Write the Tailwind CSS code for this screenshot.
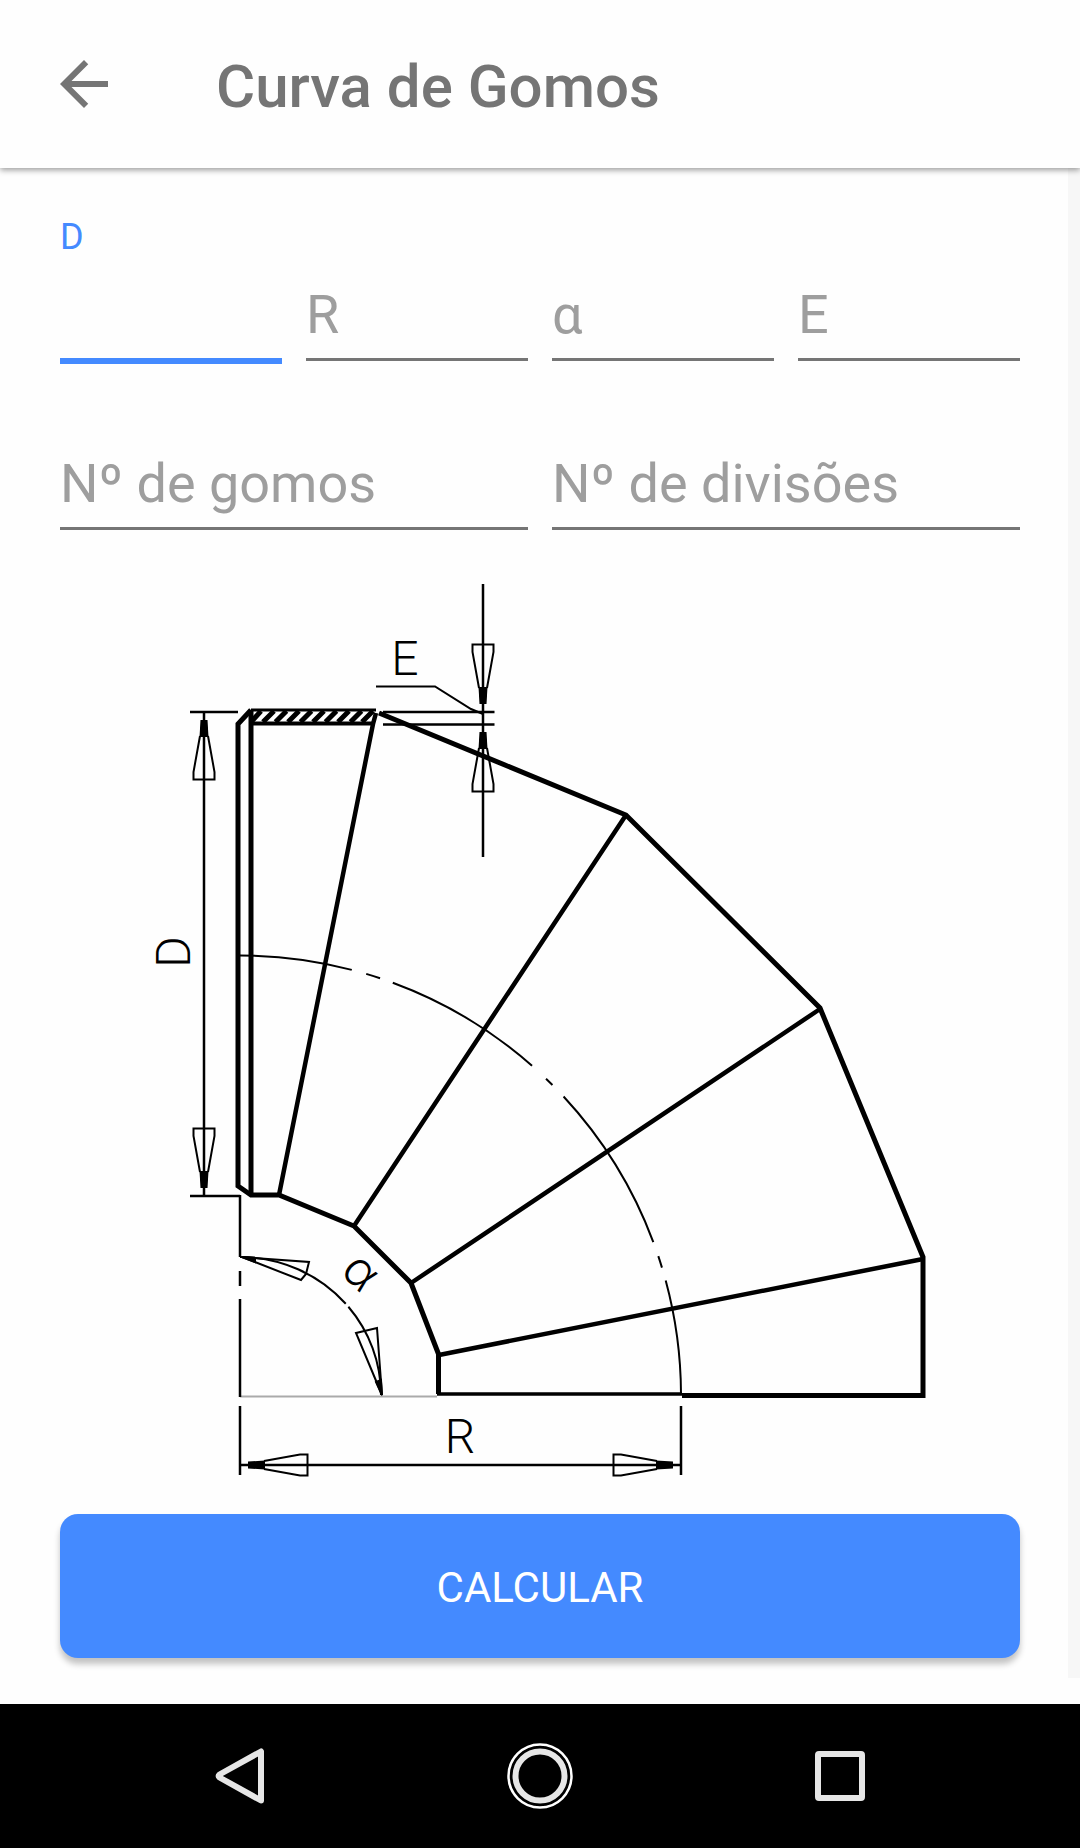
<!DOCTYPE html>
<html lang="pt-BR">
<head>
<meta charset="utf-8">
<meta name="viewport" content="width=device-width, initial-scale=1">
<title>Curva de Gomos</title>
<script src="https://cdn.jsdelivr.net/npm/@tailwindcss/browser@4"></script>
</head>
<body class="flex min-h-screen flex-col bg-[#fefefe] font-['Roboto',sans-serif]">

<header class="relative z-10 flex h-[168px] items-center gap-24 bg-[#fefefe] px-12 shadow-[0_2px_6px_rgba(0,0,0,0.4)]">
  <button type="button" aria-label="Voltar" class="size-[72px]">
    <svg viewBox="0 0 24 24" class="size-full fill-[#757575]"><path d="M20 11H7.83l5.59-5.59L12 4l-8 8 8 8 1.41-1.41L7.83 13H20z"/></svg>
  </button>
  <h1 class="pt-1.5 text-[60px] leading-[74px] font-medium text-[#757575]">Curva de Gomos</h1>
</header>

<div class="flex grow">
  <main class="grow pt-[45px] pr-12 pb-[46px] pl-[60px]">
    <form>
      <div class="grid grid-cols-4 items-start gap-6">
        <div class="flex flex-col gap-[10px]">
          <label for="diametro" class="text-4xl/12 text-[#448aff]">D</label>
          <input id="diametro" type="text" class="h-[93px] w-full border-b-6 border-[#448aff] text-[54px] outline-none">
        </div>
        <div class="pt-[58px]">
          <input type="text" aria-label="R" placeholder="R" class="h-[90px] w-full border-b-3 border-[#757575] text-[54px] outline-none placeholder:text-[#9e9e9e]">
        </div>
        <div class="pt-[58px]">
          <input type="text" aria-label="α" placeholder="α" class="h-[90px] w-full border-b-3 border-[#757575] text-[54px] outline-none placeholder:text-[#9e9e9e]">
        </div>
        <div class="pt-[58px]">
          <input type="text" aria-label="E" placeholder="E" class="h-[90px] w-full border-b-3 border-[#757575] text-[54px] outline-none placeholder:text-[#9e9e9e]">
        </div>
      </div>

      <div class="mt-[76px] grid grid-cols-2 gap-6">
        <input type="text" aria-label="Nº de gomos" placeholder="Nº de gomos" class="h-[90px] w-full border-b-3 border-[#757575] text-[54px] outline-none placeholder:text-[#9e9e9e]">
        <input type="text" aria-label="Nº de divisões" placeholder="Nº de divisões" class="h-[90px] w-full border-b-3 border-[#757575] text-[54px] outline-none placeholder:text-[#9e9e9e]">
      </div>

      <svg viewBox="60 560 960 930" class="mt-[30px] block w-full" fill="none" stroke="#000" role="img" aria-label="Desenho da curva de gomos">
        <defs>
          <!-- Dimension arrow, pointing up at the origin -->
          <g id="seta" stroke-width="2">
            <path d="M-3.500 8H3.500L4.500 25H-4.500Z" fill="#000" stroke="none"/>
            <path d="M-4 24L-10.500 60V67.500H10.500V60L4 24"/>
          </g>
        </defs>

        <!-- Segments -->
        <g stroke-width="5">
          <path d="M251 710L238 724V1186L251 1195H279L354 1226L411 1283L438.500 1354V1394"/>
          <path d="M251 710V1195"/>
          <path d="M379 713L626 815L820 1008L923 1257V1395.500H682"/>
        </g>
        <path stroke-width="4.500" d="M376 713L373 724L279 1195M626 815L354 1226M820 1009L411 1283M923 1259L439 1355"/>
        <path stroke-width="3.500" d="M437 1394H682"/>
        <path stroke="#aaa" stroke-width="2" d="M240 1396.500H437"/>

        <!-- Hatched wall -->
        <path stroke-width="3" d="M251 710H376"/>
        <path stroke-width="4" d="M251 723.500H373"/>
        <path stroke-width="5" d="M251 722L261 711M263 722L274 711M275.500 722L286.500 711M288 722L299 711M300.500 722L311.500 711M313 722L324 711M325.500 722L336.500 711M338 722L349 711M350.500 722L361.500 711M362 722L373 711"/>

        <!-- Centre lines -->
        <g stroke-width="2">
          <path d="M240 955.500A441 440 0 0 1 681 1394" stroke-dasharray="113 15 14.500 13.500 163 19 9 16 172 15 12 13.500 130"/>
          <path d="M240 1195V1257M240 1271V1286M240 1299V1397M240 1406V1475M681 1406V1475" stroke-width="2.500"/>
          <path d="M240 1257A141 138 0 0 1 381 1395" stroke-dasharray="119 4 200"/>
          <path d="M242 1257L309 1262L306 1274L301 1280ZM382 1395L377 1328L356 1333Z"/>
          <path d="M242 1257L255 1258V1262ZM382 1395L376 1382L381 1380Z" fill="#000"/>
        </g>

        <!-- Dimensions -->
        <g stroke-width="2.500">
          <path d="M204 712V1196M190 712H238M190 1196H240"/>
          <path d="M483 584V857M383 712H494.500M383 724.500H494.500"/>
          <path d="M376 686.500H435L471 709L483 714" stroke-width="2"/>
          <path d="M240 1465H681"/>
        </g>
        <use href="#seta" transform="translate(204 712)"/>
        <use href="#seta" transform="translate(204 1196) rotate(180)"/>
        <use href="#seta" transform="translate(483 712) rotate(180)"/>
        <use href="#seta" transform="translate(483 724)"/>
        <use href="#seta" transform="translate(240 1465) rotate(-90)"/>
        <use href="#seta" transform="translate(681 1465) rotate(90)"/>

        <g fill="#000" stroke="none" class="text-[48px] font-light" text-anchor="middle">
          <text x="405" y="675">E</text>
          <text transform="translate(190 952) rotate(-90)">D</text>
          <text x="460" y="1453">R</text>
          <text transform="translate(350 1283) rotate(45)" class="font-['Inter',sans-serif]">α</text>
        </g>
      </svg>

      <button type="submit" class="mt-6 h-36 w-full rounded-[18px] bg-[#448aff] pt-0.5 text-[42px] text-white shadow-[0_6px_6px_rgba(0,0,0,0.24)]">CALCULAR</button>
    </form>
  </main>
  <div class="mb-[26px] w-3 shrink-0 bg-[#f7f7f7]"></div>
</div>

<nav aria-label="Sistema" class="flex h-36 justify-center bg-black">
  <button type="button" aria-label="Voltar" class="flex w-[300px] items-center justify-center">
    <svg viewBox="0 0 72 72" class="size-[72px]" fill="none" stroke="#e6e6e6" stroke-width="6" stroke-linejoin="round"><path d="M57 11.500V60.500L15.500 37.500Q14 36 15.500 34.500Z"/></svg>
  </button>
  <button type="button" aria-label="Início" class="flex w-[300px] items-center justify-center">
    <svg viewBox="0 0 72 72" class="size-[72px]" fill="none"><circle cx="36" cy="36" r="31.500" stroke="#fff" stroke-width="2.500"/><circle cx="36" cy="36" r="24.500" stroke="#e6e6e6" stroke-width="6"/></svg>
  </button>
  <button type="button" aria-label="Recentes" class="flex w-[300px] items-center justify-center">
    <svg viewBox="0 0 72 72" class="size-[72px]" fill="none" stroke="#e6e6e6" stroke-width="6"><rect x="14" y="14" width="44" height="44" rx="1"/></svg>
  </button>
</nav>
</body>
</html>
